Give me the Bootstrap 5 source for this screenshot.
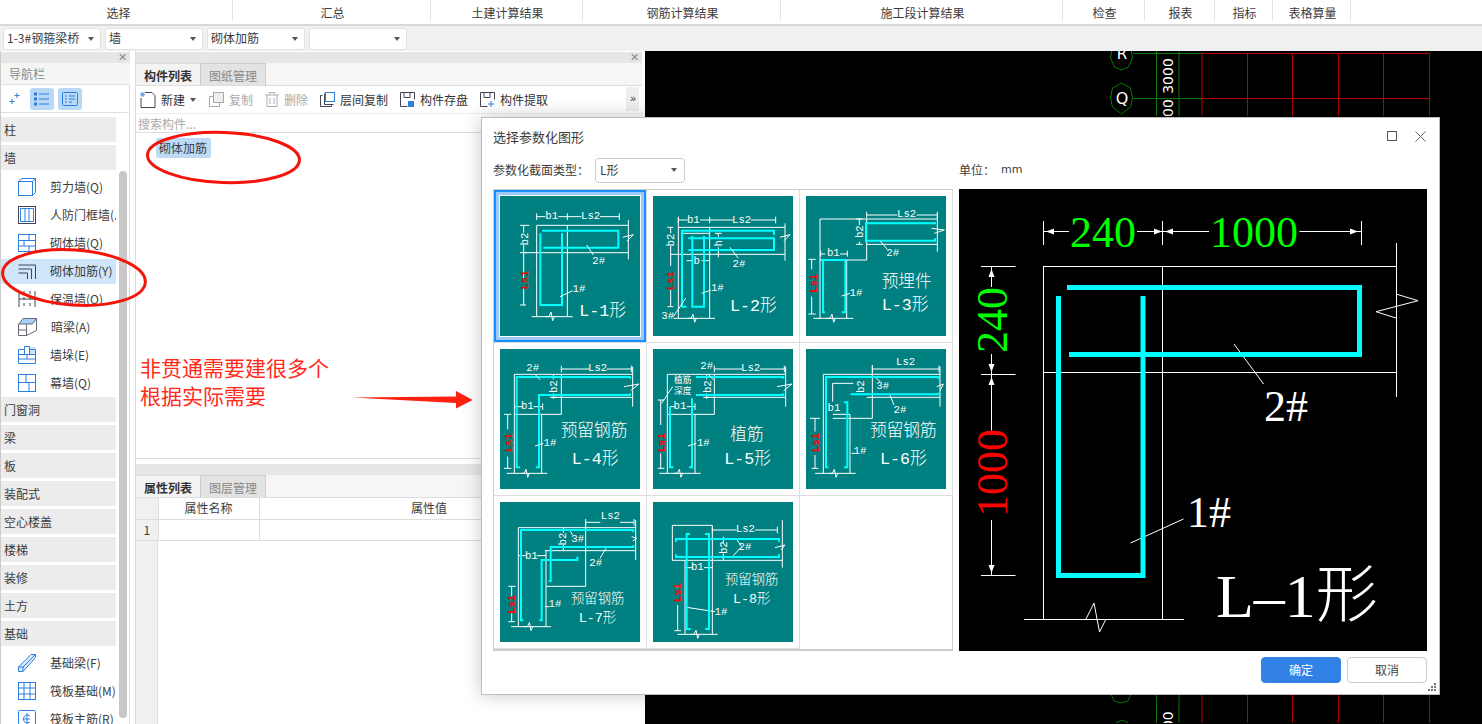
<!DOCTYPE html>
<html lang="zh-CN">
<head>
<meta charset="utf-8">
<title>选择参数化图形</title>
<link href="https://cdn.jsdelivr.net/npm/bootstrap@5.3.0/dist/css/bootstrap.min.css" rel="stylesheet">
<style>
html,body{margin:0;height:724px;background:#fff}
body{font:12px/1.2 "Noto Sans CJK SC","Liberation Sans",sans-serif;color:#3c3c3c}
.app-shell{width:1482px;height:724px}
.menu-strip{display:grid;grid-template-columns:233px 198px 152px 198px 282px 82px 70px 58px 78px;height:26px;border-bottom:2px solid #d9d9d9;background:#fff}
.menu-strip>div{height:21px;line-height:25px;text-align:center;border-right:1px solid #e2e2e2;padding-left:2px}
.menu-strip>div:first-child{padding-left:5px}
.tool-strip{height:26px;background:#f0f0f0;gap:4px;padding:2px 0 0 3px}
.sel-box{width:98px;height:22px;background:#fff;border:1px solid #e3e3e3;border-radius:3px;padding:0 3px;justify-content:space-between}
.caret-dn{width:0;height:0;border:3px solid transparent;border-top:4px solid #555;border-bottom:0;margin-right:3px;flex:none}
.nav-pane{width:135px;flex:none;border-left:1px solid #ccc;border-right:5px solid #fff;box-shadow:inset -1px 0 0 #ddd}
.pane-head{height:11px;margin-top:1px;background:#e6e6e6;font:11px/10px "Liberation Sans",sans-serif;color:#888;text-align:right;padding-right:3px;flex:none}
.nav-title{height:22px;line-height:21px;padding-left:8px;color:#8a8a8a;background:#f5f5f5;border-bottom:1px solid #e0e0e0;width:129px;flex:none}
.nav-icons{height:28px;gap:4px;padding-left:7px;border-bottom:1px solid #e0e0e0;width:129px;flex:none}
.nav-tog{width:24px;height:22px;background:#b9d8f5;border-radius:3px}
.nav-list{width:115px;padding-top:4px;flex:none}
.nav-grp{height:25px;line-height:25px;margin-bottom:3px;padding-left:3px;background:#ececec}
.nav-item{height:28px;line-height:28px;padding-left:17px;gap:14px;white-space:nowrap;overflow:hidden}
.nav-item svg{flex:none}
.nav-item.is-active{background:#cfe5fa;height:25px;margin:1.5px 0}
.scroll-thumb{left:119px;top:171px;width:8px;height:547px;background:#c8c8c8;border-radius:4px}
.mid-pane{width:507px;flex:none;border-left:1px solid #ddd}
.tab-row{height:23px;background:#f6f6f6;border-bottom:1px solid #ddd;flex:none}
.tab-on,.tab-off{width:65px;height:22px;line-height:23px;text-align:center;border-right:1px solid #ccc}
.tab-on{font-weight:700;color:#333;background:#f3f3f3;border-top:1px solid #ddd}
.tab-off{color:#888;background:#e3e3e3;border-top:1px solid #ccc}
.act-row{height:27px;padding-left:4px;flex:none;white-space:nowrap}
.act-btn{gap:5px;color:#333;margin-right:12px;line-height:15px}
.act-first{margin-right:10px}
.act-btn.is-off{color:#aaa}
.more-btn{right:3px;top:1px;width:13px;font:10px/24px "Liberation Sans",sans-serif;background:#eee;color:#333;height:24px;text-align:center;letter-spacing:-1px}
.search-row{height:20px;line-height:19px;padding-left:2px;color:#aaa;border-top:1px solid #eee;border-bottom:1px solid #ddd;flex:none}
.list-area{height:326px;border-bottom:1px solid #ddd;padding:5px 0 0 20px;flex:none}
.list-chip{width:55px;height:20px;line-height:20px;background:#bedaf5;border-radius:2px;padding-left:3px}
.pane-gap{height:4px;flex:none}
.prop-wrap{background:linear-gradient(90deg,#f0f0f0 21px,#ddd 21px,#ddd 22px,#fff 22px)}
.prop-table{margin:0;width:506px;table-layout:fixed;border-collapse:collapse}
.prop-table td,.prop-table th{border:1px solid #ddd;border-width:0 1px 1px 0;font-weight:400;font-size:12px;padding:0;text-align:center;vertical-align:middle;height:21px;color:#3c3c3c;background:transparent;box-shadow:none}
.prop-table .row-no{background:#f0f0f0;width:22px}
.prop-table .col-name{width:101px}
.prop-table .col-val{width:340px}
.cad-pane{background:#000;flex:1 1 auto;margin-left:3px}
.cad-svg{left:0;top:0}
.anno-layer{left:0;top:0;pointer-events:none}
.anno-text{left:140px;top:353px;font-size:21px;line-height:28px;color:#ff2a1a;white-space:nowrap}
.pick-dlg{left:481px;top:117px;width:959px;height:578px;background:#fff;border:1px solid #bdbdbd;box-shadow:0 0 18px rgba(0,0,0,.22);padding:0 12px 0 11px}
.dlg-title{height:39px;line-height:38px;font-size:13px;flex:none}
.win-btns{right:13px;top:13px;gap:18px}
.dlg-opts{height:32px;padding-bottom:6px;flex:none}
.dlg-opts-l{width:466px}
.type-sel{width:90px;height:25px;margin-left:6px;border:1px solid #ccc;border-radius:4px;padding:0 4px;justify-content:space-between}
.unit-val{margin-left:6px;font-family:"DejaVu Sans",sans-serif;font-size:11px}
.dlg-body{gap:6px;flex:none}
.shape-grid{display:grid;grid-template-columns:repeat(3,153px);grid-auto-rows:153px;width:460px;height:462px;border:1px solid #ccc;border-bottom-width:2px}
.shape-cell{padding:6px;border-right:1px solid #ddd;border-bottom:1px solid #ddd;position:relative}
.shape-cell.is-sel{box-shadow:inset 0 0 0 2px #1890ff,inset 0 0 0 5px #9cc9fb}
.shape-cell.is-blank{border:0}
.shape-cell svg{display:block;background:#008080}
.ln{stroke:#fff;stroke-width:3;fill:none}
.rb{stroke:#0ff;stroke-width:6;fill:none}
.tx{fill:#fff;font-family:"Liberation Mono",monospace;font-size:32px;text-anchor:middle;dominant-baseline:central}
.rt{fill:#f00;font-weight:700}
.cj{fill:#fff;font-family:"Liberation Mono","Noto Sans CJK SC",monospace;font-size:50px;text-anchor:middle;dominant-baseline:central;font-weight:300}
.cs{font-size:40px}
.cx{font-size:26px;font-weight:400}
.pv-box{width:468px;height:462px;background:#000;display:block}
.dlg-foot{height:43px;gap:6px;padding-top:6px;justify-content:flex-end;flex:none}
.foot-btn{width:80px;height:26px;padding:0;font-size:12px;line-height:24px;border-radius:4px}
.btn-ok{background:#3282e6;border-color:#3282e6;color:#fff}
.btn-no{background:#fff;border-color:#ccc;color:#444}
.grip{right:2px;bottom:2px}
</style>
</head>
<body class="overflow-hidden">
<div class="app-shell d-flex flex-column position-relative overflow-hidden">
  <div class="menu-strip">
    <div>选择</div><div>汇总</div><div>土建计算结果</div><div>钢筋计算结果</div><div>施工段计算结果</div><div>检查</div><div>报表</div><div>指标</div><div>表格算量</div>
  </div>
  <div class="tool-strip d-flex">
    <div class="sel-box d-flex align-items-center"><span>1-3#钢箍梁桥</span><i class="caret-dn"></i></div>
    <div class="sel-box d-flex align-items-center"><span>墙</span><i class="caret-dn"></i></div>
    <div class="sel-box d-flex align-items-center"><span>砌体加筋</span><i class="caret-dn"></i></div>
    <div class="sel-box d-flex align-items-center"><span></span><i class="caret-dn"></i></div>
  </div>
  <div class="d-flex flex-grow-1 overflow-hidden">
    <aside class="nav-pane d-flex flex-column overflow-hidden">
      <div class="pane-head">✕</div>
      <div class="nav-title">导航栏</div>
      <div class="nav-icons d-flex align-items-center">
        <svg class="me-1" width="14" height="14" viewBox="0 0 14 14" fill="none" stroke="#2b7fe0" stroke-width="1"><path d="M9 1v5M6.500 3.500h5M4 7v5M1.500 9.500h5"/></svg>
        <div class="nav-tog d-flex align-items-center justify-content-center"><svg width="16" height="14" viewBox="0 0 16 14" fill="none" stroke="#2b7fe0"><path d="M5 2h10M5 7h10M5 12h10"/><rect x=".5" y="1" width="2" height="2"/><rect x=".5" y="6" width="2" height="2"/><rect x=".5" y="11" width="2" height="2"/></svg></div>
        <div class="nav-tog d-flex align-items-center justify-content-center"><svg width="16" height="14" viewBox="0 0 16 14" fill="none" stroke="#2b7fe0"><rect x=".5" y=".5" width="15" height="13" rx="1"/><path d="M3 4h2M7 4h6M3 7h2M7 7h6M3 10h2M7 10h3"/></svg></div>
      </div>
      <div class="nav-list">
        <div class="nav-grp">柱</div>
        <div class="nav-grp">墙</div>
        <div class="nav-item d-flex align-items-center"><svg width="18" height="18" viewBox="0 0 18 18" fill="none" stroke="#2b7fe0"><rect x=".5" y="3.500" width="14" height="14"/><path d="M.5 3.500 4 .5h13.500v14l-3 3M14.500 3.500l3-3"/></svg><span>剪力墙(Q)</span></div>
        <div class="nav-item d-flex align-items-center"><svg width="18" height="18" viewBox="0 0 18 18" fill="none"><rect x=".5" y=".5" width="17" height="17" stroke="#445"/><path d="M2.500 2.500h13v13h-13zM7 2.500v13M11 2.500v13" stroke="#2b7fe0"/></svg><span>人防门框墙(.</span></div>
        <div class="nav-item d-flex align-items-center"><svg width="18" height="18" viewBox="0 0 18 18" fill="none" stroke="#2b7fe0"><rect x=".5" y=".5" width="17" height="17"/><path d="M.5 6.500h17M.5 12h17M11 .5v6M6 6.500V12M11 12v5.500"/></svg><span>砌体墙(Q)</span></div>
        <div class="nav-item is-active d-flex align-items-center"><svg width="18" height="18" viewBox="0 0 18 18" fill="none" stroke="#445"><path d="M.5 3H17.500V17M.5 7H13.500V17M.5 11H9.500V17"/></svg><span>砌体加筋(Y)</span></div>
        <div class="nav-item d-flex align-items-center"><svg width="18" height="18" viewBox="0 0 18 18" fill="none" stroke="#445"><path d="M1 1v16M17 1v16M6 1v3M6 7v3M6 13v3M12 1v3M12 7v3M12 13v3M1 9h16"/></svg><span>保温墙(Q)</span></div>
        <div class="nav-item d-flex align-items-center"><svg width="19" height="18" viewBox="0 0 19 18" fill="none" stroke="#667"><path d="M.5 6.500 5 .5h13.500l-4 5.500H.5z" fill="#a9d1f5"/><path d="M.5 6.500v11h8l10-5V.5M8.500 6.500v11M.5 12h8"/></svg><span>暗梁(A)</span></div>
        <div class="nav-item d-flex align-items-center"><svg width="18" height="18" viewBox="0 0 18 18" fill="none" stroke="#2b7fe0"><rect x="12" y="1" width="5.500" height="7" fill="#cfe2f6" stroke="none"/><path d="M.5 3.500v14h17v-14h-6V.5h-5v3zM.5 8.500h17M.5 13h17M9 8.500V13M6.500 3.500v5M11.500 3.500v5"/></svg><span>墙垛(E)</span></div>
        <div class="nav-item d-flex align-items-center"><svg width="18" height="18" viewBox="0 0 18 18" fill="none" stroke="#2b7fe0"><rect x=".5" y=".5" width="17" height="17"/><path d="M.5 8.500h17M8 .5v8M11 8.500v9"/></svg><span>幕墙(Q)</span></div>
        <div class="nav-grp">门窗洞</div>
        <div class="nav-grp">梁</div>
        <div class="nav-grp">板</div>
        <div class="nav-grp">装配式</div>
        <div class="nav-grp">空心楼盖</div>
        <div class="nav-grp">楼梯</div>
        <div class="nav-grp">装修</div>
        <div class="nav-grp">土方</div>
        <div class="nav-grp">基础</div>
        <div class="nav-item d-flex align-items-center"><svg width="18" height="18" viewBox="0 0 18 18" fill="none" stroke="#2b7fe0"><path d="M.5 13 13 .5h4.500v3L5 17.500H.5zM.5 13h4.500v4.500M5 13 17.500 .5" fill="#dbe9f8"/></svg><span>基础梁(F)</span></div>
        <div class="nav-item d-flex align-items-center"><svg width="18" height="18" viewBox="0 0 18 18" fill="none" stroke="#2b7fe0"><rect x=".5" y=".5" width="17" height="17"/><path d="M6 .5v17M12 .5v17M.5 6h17M.5 12h17"/></svg><span>筏板基础(M)</span></div>
        <div class="nav-item d-flex align-items-center"><svg width="18" height="18" viewBox="0 0 18 18" fill="none" stroke="#2b7fe0"><rect x=".5" y=".5" width="17" height="17" rx="1"/><path d="M12 6a4 4 0 1 0 0 6M9 3v12M6 9h6"/></svg><span>筏板主筋(R)</span></div>
      </div>
    </aside>
    <section class="mid-pane d-flex flex-column position-relative">
      <div class="pane-head">✕</div>
      <div class="tab-row d-flex"><div class="tab-on">构件列表</div><div class="tab-off">图纸管理</div></div>
      <div class="act-row d-flex align-items-center position-relative">
        <span class="act-btn act-first d-flex align-items-center"><svg width="16" height="16" viewBox="0 0 16 16" fill="none" stroke="#445"><path d="M1 6v9.500h14V3.500L12 .5H5"/><path d="M.5.500h4v4h-4z" fill="#6aa9ea" stroke="none"/></svg>新建<i class="caret-dn"></i></span>
        <span class="act-btn is-off d-flex align-items-center"><svg width="15" height="15" viewBox="0 0 15 15" fill="none" stroke="#aaa"><rect x="4.500" y=".5" width="10" height="10" fill="#eee"/><path d="M4.500 4.500h-4v10h10v-4"/></svg>复制</span>
        <span class="act-btn is-off d-flex align-items-center"><svg width="14" height="15" viewBox="0 0 14 15" fill="none" stroke="#aaa"><path d="M.5 3h13M4.500 3V.5h5V3M2 3v11.500h10V3M5 6v6M9 6v6"/></svg>删除</span>
        <span class="act-btn d-flex align-items-center"><svg width="15" height="15" viewBox="0 0 15 15" fill="none" stroke="#445"><path d="M2.500 3.500h-2v11h11v-2"/><path d="M4.500 1.500v11h9"/><rect x="5.500" y=".5" width="9" height="9" stroke="#2b7fe0"/></svg>层间复制</span>
        <span class="act-btn d-flex align-items-center"><svg width="15" height="15" viewBox="0 0 15 15" fill="none" stroke="#445"><path d="M.5.500h14v7M.5.500v14h7M4 .5v5h6v-5"/><rect x="8" y="9" width="6" height="6" fill="#2b7fe0" stroke="none"/></svg>构件存盘</span>
        <span class="act-btn d-flex align-items-center"><svg width="15" height="15" viewBox="0 0 15 15" fill="none" stroke="#445"><path d="M.5.500h14v7M.5.500v14h7M4 .5v5h6v-5"/><path d="M11 9v6M8 12h6" stroke="#2b7fe0"/></svg>构件提取</span>
        <div class="more-btn position-absolute">››</div>
      </div>
      <div class="search-row">搜索构件...</div>
      <div class="list-area"><div class="list-chip">砌体加筋</div></div>
      <div class="pane-gap"></div>
      <div class="pane-head"></div>
      <div class="tab-row d-flex"><div class="tab-on">属性列表</div><div class="tab-off">图层管理</div></div>
      <div class="prop-wrap flex-grow-1">
        <table class="table prop-table">
          <tr><th class="row-no"></th><th class="col-name">属性名称</th><th class="col-val">属性值</th><th></th></tr>
          <tr><td class="row-no">1</td><td></td><td></td><td></td></tr>
        </table>
      </div>
    </section>
    <main class="cad-pane position-relative">
      <svg class="cad-svg position-absolute" width="837" height="672" viewBox="645 52 837 672" fill="none">
        <g stroke="#0a7a0a" stroke-width="1">
          <path d="M1133 54.500H1202M1133 99.500H1202M1156.500 52V117M1179 52V117M1156.500 695V724M1179 695V724"/>
          <path d="M1121.500 43l9 5 2 11-4 9-7 3-7-3-4-9 2-11zM1121.500 84l9 5 2 10-2 9-9 7-9-7-2-9 2-10zM1111 695l3 7 7 2 7-2 3-7M1116 724l6-3 6 3"/>
        </g>
        <g stroke="#b80000" stroke-width="1">
          <path d="M1202 54.500H1429.500M1202 99.500H1429.500M1202 54V117M1247.500 54V117M1292.500 54V117M1338.500 54V117M1383.500 54V117M1429.500 54V117M1202 695V724M1247.500 695V724M1292.500 695V724M1338.500 695V724M1383.500 695V724M1429.500 695V724"/>
        </g>
        <text x="1122" y="60" fill="#fff" font-family="DejaVu Sans" font-size="15" text-anchor="middle">R</text>
        <text x="1122" y="105" fill="#fff" font-family="DejaVu Sans" font-size="16" text-anchor="middle">Q</text>
        <text transform="translate(1173 77) rotate(-90)" fill="#fff" font-family="DejaVu Sans" font-size="14" text-anchor="middle">3000</text>
        <text transform="translate(1173 118) rotate(-90)" fill="#fff" font-family="DejaVu Sans" font-size="14">00</text>
        <text transform="translate(1173 739) rotate(-90)" fill="#fff" font-family="DejaVu Sans" font-size="14">000</text>
      </svg>
    </main>
  </div>

  <div class="scroll-thumb position-absolute"></div>

  <svg class="anno-layer position-absolute" width="1482" height="724" fill="none">
    <ellipse cx="223.500" cy="157.500" rx="76" ry="25" stroke="#f4140a" stroke-width="3" transform="rotate(2 223 157)"/>
    <ellipse cx="74" cy="277.500" rx="71.500" ry="27.500" stroke="#f4140a" stroke-width="3" transform="rotate(4 74 277)"/>
    <path d="M352 397.500 456 396.500V391L472.700 400 456 408.500V403z" fill="#ff2010"/>
  </svg>
  <div class="anno-text position-absolute">非贯通需要建很多个<br>根据实际需要</div>

  <div class="pick-dlg position-absolute d-flex flex-column">
    <div class="dlg-title">选择参数化图形</div>
    <div class="win-btns position-absolute d-flex">
      <svg width="10" height="10" viewBox="0 0 10 10" fill="none" stroke="#555"><rect x=".5" y=".5" width="9" height="9"/></svg>
      <svg width="11" height="11" viewBox="0 0 11 11" fill="none" stroke="#666"><path d="M.5.500l10 10M10.500.500l-10 10"/></svg>
    </div>
    <div class="dlg-opts d-flex align-items-center">
      <div class="dlg-opts-l d-flex align-items-center">
        <span>参数化截面类型：</span>
        <div class="type-sel d-flex align-items-center"><span>L形</span><i class="caret-dn"></i></div>
      </div>
      <span>单位：</span><span class="unit-val">mm</span>
    </div>
    <div class="dlg-body d-flex">
      <div class="shape-grid">
        <div class="shape-cell is-sel"><svg width="140" height="140" viewBox="60 258 420 420">
          <path class="ln" d="M170 310v20M262 310v20M418 310v20M170 320h26M235 320h27M262 320h42M360 320h58"/>
          <path class="ln" d="M170 346H445M445 330V448M130 428H445M170 346V620M262 346V620M155 620H278M195 620l12 0 6-14 5 26 5-12"/>
          <path class="ln" d="M120 346h28M120 585h18M131 346v22M131 405v100M131 535v50M120 428h22M428 382l32-8-20 20"/>
          <path class="rb" d="M187 362H415V413H190M181 370V585H246V370"/>
          <path class="ln" d="M320 405l20 30M240 560l38-18"/>
          <text class="tx" x="215" y="319">b1</text><text class="tx" x="332" y="319">Ls2</text>
          <text class="tx" transform="rotate(-90 135 387)" x="135" y="387">b2</text>
          <text class="tx rt" transform="rotate(-90 135 510)" x="135" y="510">Ls1</text>
          <text class="tx" x="356" y="453">2#</text><text class="tx" x="297" y="537">1#</text>
          <text class="cj" x="368" y="605">L-1形</text>
        </svg></div>
        <div class="shape-cell"><svg width="140" height="140" viewBox="519 258 420 420">
          <path class="ln" d="M595 320v20M689 320v20M887 320v20M595 330h28M660 330h29M689 330h70M812 330h75"/>
          <path class="ln" d="M595 352H915M915 340V452M570 433H915M595 322V625M689 352V625M605 370H689M580 625H705M625 625h8l6-12 5 24 5-12"/>
          <path class="ln" d="M562 352h18M572 352v18M572 408v60M572 540v50M562 590h18M620 452h20M665 452h24M705 370h20M705 420h20M715 370v10M715 412v30M900 382l30-8-18 18"/>
          <path class="rb" d="M620 590H606V362H882V375M625 385H882V420H625M637 378V590H672V378"/>
          <path class="ln" d="M750 412l25 33M665 550l28-10M617 565l-37 55"/>
          <text class="tx" x="640" y="329">b1</text><text class="tx" x="785" y="329">Ls2</text>
          <text class="tx" transform="rotate(-90 574 390)" x="574" y="390">b2</text>
          <text class="tx rt" transform="rotate(-90 574 512)" x="574" y="512">Ls1</text>
          <text class="tx" transform="rotate(-90 718 400)" x="718" y="400">h</text>
          <text class="tx" x="650" y="452">b</text>
          <text class="tx" x="777" y="462">2#</text><text class="tx" x="712" y="535">1#</text><text class="tx" x="563" y="619">3#</text>
          <text class="cj" x="820" y="590">L-2形</text>
        </svg></div>
        <div class="shape-cell"><svg width="140" height="140" viewBox="978 258 420 420">
          <path class="ln" d="M1160 305v20M1372 305v20M1160 315h92M1310 315h62"/>
          <path class="ln" d="M1020 327H1372M1372 310V425M1160 327V450M1160 403H1372M1020 450H1160M1020 327V625M1100 450V625M1000 625H1120M1040 625h10l6-12 5 24 5-12"/>
          <path class="ln" d="M1128 327h20M1138 327v18M1138 395v8M1128 403h20M1022 422v18M1102 422v18M1022 432h14M1080 432h22M985 448h22M995 448v30M995 560v52M985 612h22M1355 355l38 5-30 10"/>
          <path class="rb" d="M1365 336V340H1158V392H1365V385M1035 607H1029V450H1096V607H1085"/>
          <path class="ln" d="M1200 392l22 26M1085 558l25-8"/>
          <text class="tx" x="1280" y="313">Ls2</text><text class="tx" x="1060" y="428">b1</text>
          <text class="tx" transform="rotate(-90 1140 365)" x="1140" y="365">b2</text>
          <text class="tx rt" transform="rotate(-90 1001 520)" x="1001" y="520">Ls1</text>
          <text class="tx" x="1238" y="430">2#</text><text class="tx" x="1128" y="549">1#</text>
          <text class="cj" x="1280" y="516">预埋件</text><text class="cj" x="1275" y="586">L-3形</text>
        </svg></div>
        <div class="shape-cell"><svg width="140" height="140" viewBox="30 12 420 420">
          <path class="ln" d="M214 62v20M424 62v20M214 72h84M350 72h74"/>
          <path class="ln" d="M73 88H428M73 88V385M214 88V208M73 208H214M155 208V385M50 385H172M428 65V185M190 157H428M92 385h10l6-12 5 24 5-12M402 125l45-8-25 20"/>
          <path class="ln" d="M190 88v15M190 145v17M180 157h20M75 185h22M130 185h28M158 175v20M42 208h22M53 208v45M53 335v35M42 370h22"/>
          <path class="rb" d="M90 367H80V96H420V101M420 145V150H147V367H138"/>
          <path class="ln" d="M135 88l15 16M135 303l25-8"/>
          <text class="tx" x="323" y="69">Ls2</text><text class="tx" x="128" y="69">2#</text><text class="tx" x="112" y="184">b1</text>
          <text class="tx" transform="rotate(-90 192 125)" x="192" y="125">b2</text>
          <text class="tx rt" transform="rotate(-90 56 293)" x="56" y="293">Ls1</text>
          <text class="tx" x="180" y="294">1#</text>
          <text class="cj" x="312" y="258">预留钢筋</text><text class="cj" x="315" y="343">L-4形</text>
        </svg></div>
        <div class="shape-cell"><svg width="140" height="140" viewBox="489 12 420 420">
          <path class="ln" d="M673 62v20M883 62v20M673 72h84M810 72h73"/>
          <path class="ln" d="M532 88H887M532 88V208M532 208H673M673 88V208M887 65V185M650 157H887M532 208V385M615 208V385M508 385H632M552 385h10l6-12 5 24 5-12M861 125l45-8-25 20"/>
          <path class="ln" d="M650 88v15M650 145v17M640 157h20M540 185h16M590 185h25M615 175v20M503 165h20M512 165v75M512 325v45M503 370h20M548 125l-33 50"/>
          <path class="rb" d="M618 96H880V101M618 150H880V145M550 367H540V185M597 367H606V160"/>
          <path class="ln" d="M655 88l15 16M594 303l25-8"/>
          <text class="tx" x="782" y="69">Ls2</text><text class="tx" x="650" y="63">2#</text><text class="tx" x="570" y="184">b1</text>
          <text class="cj cx" x="578" y="109">植筋</text><text class="cj cx" x="578" y="140">深度</text>
          <text class="tx" transform="rotate(-90 655 125)" x="655" y="125">b2</text>
          <text class="tx rt" transform="rotate(-90 515 293)" x="515" y="293">Ls1</text>
          <text class="tx" x="640" y="294">1#</text>
          <text class="cj" x="771" y="270">植筋</text><text class="cj" x="773" y="343">L-5形</text>
        </svg></div>
        <div class="shape-cell"><svg width="140" height="140" viewBox="948 12 420 420">
          <path class="ln" d="M1147 62v20M1347 62v20M1147 72h200"/>
          <path class="ln" d="M1000 88H1350M1000 88V385M1147 60V220M1130 157H1350M1350 65V185M1028 220H1147M1028 115V170M1028 115H1090M960 220H990M1080 208V385M1028 208H1080M975 385H1097M1017 385h10l6-12 5 24 5-12"/>
          <path class="ln" d="M975 220v40M975 330v40M965 370h20M1340 125l20-8-10 20M1157 97l15 15M1200 150l12 30M1085 325h10"/>
          <path class="rb" d="M1015 367H1008V96H1345V101M1085 145V148H1345V143M1062 172H1072V367H1062"/>
          <text class="tx" x="1247" y="51">Ls2</text><text class="tx" x="1032" y="190">b1</text>
          <text class="tx" transform="rotate(-90 1112 125)" x="1112" y="125">b2</text>
          <text class="tx" x="1178" y="123">3#</text><text class="tx" x="1230" y="195">2#</text>
          <text class="tx rt" transform="rotate(-90 978 293)" x="978" y="293">Ls1</text>
          <text class="tx" x="1110" y="318">1#</text>
          <text class="cj" x="1240" y="258">预留钢筋</text><text class="cj" x="1240" y="343">L-6形</text>
        </svg></div>
        <div class="shape-cell"><svg width="140" height="140" viewBox="30 471 420 420">
          <path class="ln" d="M287 522v20M432 522v20M287 532h44M390 532h42"/>
          <path class="ln" d="M85 548H437M85 548V845M437 525V645M165 617H437M287 532V724M168 617V845M168 724H287M63 845H183M102 845h10l6-12 5 24 5-12"/>
          <path class="ln" d="M220 548v15M220 600v17M85 632h22M140 632h28M55 724h22M65 724v30M65 805v25M55 830h20M425 575l15 5-12 8M165 785h12M240 556l8 15M348 610l-18 30"/>
          <path class="rb" d="M100 826H93V555H430V562M430 600V606H182V708H176M262 635V645H155V826H148"/>
          <text class="tx" x="361" y="514">Ls2</text><text class="tx" x="124" y="632">b1</text>
          <text class="tx" transform="rotate(-90 218 582)" x="218" y="582">b2</text>
          <text class="tx" x="263" y="581">3#</text><text class="tx" x="317" y="653">2#</text>
          <text class="tx rt" transform="rotate(-90 67 778)" x="67" y="778">Ls1</text>
          <text class="tx" x="195" y="777">1#</text>
          <text class="cj cs" x="323" y="762">预留钢筋</text><text class="cj cs" x="322" y="820">L-7形</text>
        </svg></div>
        <div class="shape-cell"><svg width="140" height="140" viewBox="489 471 420 420">
          <path class="ln" d="M667 545v20M862 545v20M667 555h72M795 555h67"/>
          <path class="ln" d="M547 541H667V646H547zM877 525V668M667 646H877M585 646V868M667 646V868M562 868H683M602 868h10l6-12 5 24 5-12M855 608l30-8-12 15"/>
          <path class="ln" d="M553 725h20M563 725v0M563 780v77M553 857h20M700 575v20M700 625v20M585 668h22M642 668h25M590 787l85 13M740 583l15 22M730 632l20-22"/>
          <path class="rb" d="M558 590V582H867V590M558 628V636H867V628M600 567H590V852H602M645 567H657V852H645"/>
          <text class="tx" x="766" y="552">Ls2</text><text class="tx" x="622" y="667">b1</text>
          <text class="tx" transform="rotate(-90 703 608)" x="703" y="608">b2</text>
          <text class="tx" x="765" y="605">2#</text>
          <text class="tx rt" transform="rotate(-90 565 743)" x="565" y="743">Ls1</text>
          <text class="tx" x="693" y="800">1#</text>
          <text class="cj cs" x="785" y="705">预留钢筋</text><text class="cj cs" x="785" y="763">L-8形</text>
        </svg></div>
        <div class="shape-cell is-blank"></div>
      </div>
      <svg class="pv-box" viewBox="959 189 468 462" fill="none">
        <g stroke="#fff" stroke-width="1">
          <path d="M1043.500 266.500H1396.500M1043.500 372.500H1396.500M1043.500 266V619M1162.500 266V619M1396.500 243V397M1024 619.500H1184M1086 619l8-16 5.500 29 6.500-13M1396 294l22 6.700-42 11 20 6.300"/>
          <path d="M1043.500 221V245M1162.500 221V245M1361.500 221V245M1043.500 231.500H1069M1137 231.500H1162M1162 231.500H1209M1299.500 231.500H1361"/>
          <path d="M981 266.500H1015.500M981 374.500H1015.500M981 575.500H1015.500M991.500 266V287M991.500 354V374M991.500 374V430.500M991.500 520V575"/>
          <path d="M1234 344l29.600 40M1130.500 543l53-24"/>
        </g>
        <path d="M1046 231.500l8-3v6zM1162 231.500l-8-3v6zM1165 231.500l8-3v6zM1358 231.500l-8-3v6zM991.500 269l-3 8h6zM991.500 372l-3-8h6zM991.500 377l-3 8h6zM991.500 573l-3-8h6z" fill="#fff"/>
        <path d="M1067 287.500H1359.500V354.500H1069M1058.500 296V575.500H1143V296" stroke="#0ff" stroke-width="5"/>
        <text x="1103" y="247" fill="#0f0" font-family="Liberation Serif" font-size="44" text-anchor="middle">240</text>
        <text x="1254" y="247" fill="#0f0" font-family="Liberation Serif" font-size="44" text-anchor="middle">1000</text>
        <text transform="translate(1007 320) rotate(-90)" fill="#0f0" font-family="Liberation Serif" font-size="44" text-anchor="middle">240</text>
        <text transform="translate(1007 473) rotate(-90)" fill="#f00" font-family="Liberation Serif" font-size="44" text-anchor="middle">1000</text>
        <text x="1286" y="421" fill="#fff" font-family="Liberation Serif" font-size="44" text-anchor="middle">2#</text>
        <text x="1209" y="527" fill="#fff" font-family="Liberation Serif" font-size="44" text-anchor="middle">1#</text>
        <text x="1216" y="617" fill="#fff" font-family="Liberation Serif,Noto Sans CJK SC,serif" font-size="62" font-weight="300">L–1形</text>
      </svg>
    </div>
    <div class="dlg-foot d-flex">
      <button type="button" class="btn foot-btn btn-ok">确定</button>
      <button type="button" class="btn foot-btn btn-no">取消</button>
    </div>
    <svg class="grip position-absolute" width="9" height="9" viewBox="0 0 9 9" fill="#777"><rect x="6" y="0" width="2" height="2"/><rect x="3" y="3" width="2" height="2"/><rect x="6" y="3" width="2" height="2"/><rect x="0" y="6" width="2" height="2"/><rect x="3" y="6" width="2" height="2"/><rect x="6" y="6" width="2" height="2"/></svg>
  </div>
</div>
<script src="https://cdn.jsdelivr.net/npm/bootstrap@5.3.0/dist/js/bootstrap.bundle.min.js"></script>
</body>
</html>
